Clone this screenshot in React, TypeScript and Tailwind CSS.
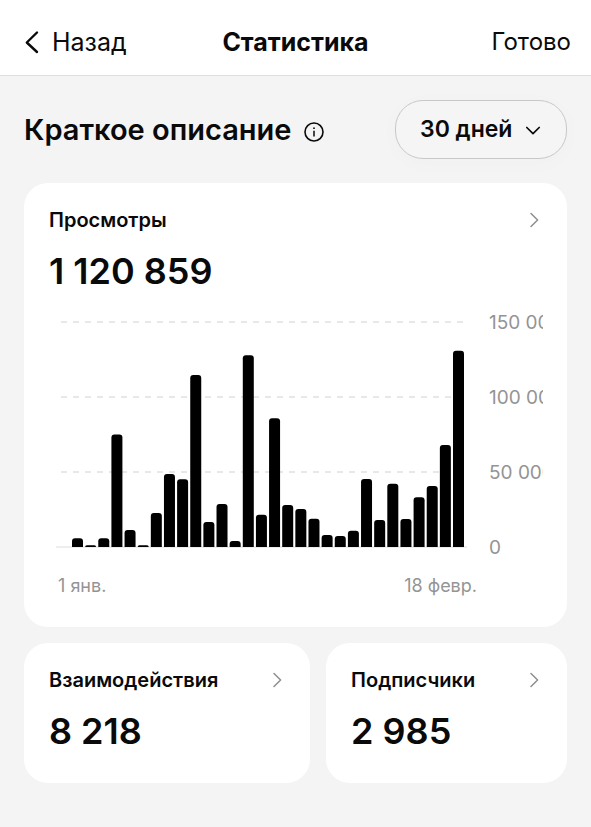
import { useState } from "react";

const FONT = "font-['Inter','Liberation_Sans',sans-serif]";

const views = [
  5800, 1200, 5800, 75000, 11300, 1100, 22700, 48600, 45200, 114600,
  16600, 28600, 4000, 127800, 21500, 85800, 28000, 25300, 18900, 8000,
  7300, 10900, 45300, 18000, 42200, 18700, 33200, 40600, 68000, 130900,
];

const ticks = [
  { value: 150000, label: "150 000" },
  { value: 100000, label: "100 000" },
  { value: 50000, label: "50 000" },
  { value: 0, label: "0" },
];

// Chart geometry, in viewBox units
const BASE = 254;
const SCALE = 75 / 50000;
const FIRST_X = 23;
const LAST_X = 404;
const BAR_WIDTH = 11;

function Chevron() {
  return (
    <svg width="10" height="16" viewBox="0 0 10 16" fill="none" className="mr-1 shrink-0 text-[#8e8e8e]" aria-hidden="true">
      <path d="M2 1.5 8.6 8 2 14.5" stroke="currentColor" strokeWidth="1.5" strokeLinecap="round" strokeLinejoin="round" />
    </svg>
  );
}

function CardHead({ title, value }: { title: string; value: string }) {
  return (
    <>
      <a href="#" className="flex items-center justify-between text-[20px] leading-[26px] font-semibold">
        {title}
        <Chevron />
      </a>
      <p className="mt-4 text-[36px] leading-[44px] font-semibold">{value}</p>
    </>
  );
}

function ViewsChart() {
  const step = (LAST_X - FIRST_X) / (views.length - 1);

  return (
    <svg viewBox="0 0 494 310" className="block w-full overflow-hidden" role="img" aria-label="Просмотры по дням">
      {ticks.map(({ value, label }) => {
        const y = BASE - value * SCALE;
        return (
          <g key={value}>
            {value > 0 ? (
              <line x1="12" x2="418" y1={y} y2={y} stroke="#e8e8e8" strokeWidth="2" strokeDasharray="6 6" />
            ) : (
              <line x1="7" x2="418" y1={y} y2={y} stroke="#dcdcdc" strokeWidth="1" />
            )}
            <text x="440" y={y + 7} fontSize="19" fill="#949494">
              {label}
            </text>
          </g>
        );
      })}

      {views.map((count, i) => {
        const x = FIRST_X + i * step;
        const height = Math.max(count * SCALE, 1);
        const r = Math.min(3, height);
        return (
          <path
            key={i}
            d={`M${x} ${BASE}v${r - height}q0 ${-r} ${r} ${-r}h${BAR_WIDTH - 2 * r}q${r} 0 ${r} ${r}v${height - r}z`}
            fill="#000"
          />
        );
      })}

      <text x="9" y="299" fontSize="18" fill="#949494">
        1 янв.
      </text>
      <text x="428" y="299" fontSize="18" fill="#949494" textAnchor="end">
        18 февр.
      </text>
    </svg>
  );
}

export default function App() {
  const [period, setPeriod] = useState("30");

  return (
    <div className={`min-h-screen bg-[#f4f4f4] text-[#0a0a0a] ${FONT}`}>
      <header className="grid grid-cols-[1fr_auto_1fr] items-center border-b border-[#dedede] bg-white px-5 pt-[26px] pb-[17px] text-[25px] leading-8">
        <button type="button" className="flex items-center gap-3 justify-self-start pl-1">
          <svg width="16" height="24" viewBox="0 0 16 24" fill="none" aria-hidden="true">
            <path d="M13 2.5 2.8 12.5 13 22" stroke="currentColor" strokeWidth="2.4" strokeLinecap="round" strokeLinejoin="round" />
          </svg>
          Назад
        </button>
        <h1 className="font-bold">Статистика</h1>
        <button type="button" className="justify-self-end text-[24px]">
          Готово
        </button>
      </header>

      <main className="px-6 pt-6 pb-11">
        <div className="flex items-center justify-between">
          <div className="flex items-center gap-3">
            <h2 className="text-[29px] leading-9 font-semibold">Краткое описание</h2>
            <button type="button" aria-label="Подробнее" className="pt-1">
              <svg width="20" height="20" viewBox="0 0 20 20" fill="none" aria-hidden="true">
                <circle cx="10" cy="10" r="9" stroke="currentColor" strokeWidth="1.6" />
                <circle cx="10" cy="6.2" r="0.9" fill="currentColor" />
                <path d="M10 8.8v5.6" stroke="currentColor" strokeWidth="1.5" />
              </svg>
            </button>
          </div>

          <div className="relative">
            <select
              aria-label="Период"
              value={period}
              onChange={(e) => setPeriod(e.target.value)}
              className="block h-[59px] appearance-none rounded-[28px] border border-[#c8c8c8] bg-[#f5f5f5] pr-[53px] pl-6 text-[23px] font-semibold shadow-[0_4px_24px_rgba(0,0,0,0.02)]"
            >
              <option value="7">7 дней</option>
              <option value="30">30 дней</option>
              <option value="90">90 дней</option>
            </select>
            <svg width="16" height="10" viewBox="0 0 16 10" fill="none" className="pointer-events-none absolute top-[26px] right-[26px]" aria-hidden="true">
              <path d="M1.8 1.5 8 7.7l6.2-6.2" stroke="currentColor" strokeWidth="1.7" strokeLinecap="round" strokeLinejoin="round" />
            </svg>
          </div>
        </div>

        <section className="mt-6 rounded-3xl bg-white px-[25px] py-6 pr-6">
          <CardHead title="Просмотры" value="1 120 859" />
          <ViewsChart />
        </section>

        <div className="mt-4 grid grid-cols-[19fr_16fr] gap-4">
          <section className="rounded-3xl bg-white pt-6 pr-6 pb-[30px] pl-[25px]">
            <CardHead title="Взаимодействия" value="8 218" />
          </section>
          <section className="rounded-3xl bg-white pt-6 pr-6 pb-[30px] pl-[25px]">
            <CardHead title="Подписчики" value="2 985" />
          </section>
        </div>
      </main>
    </div>
  );
}
